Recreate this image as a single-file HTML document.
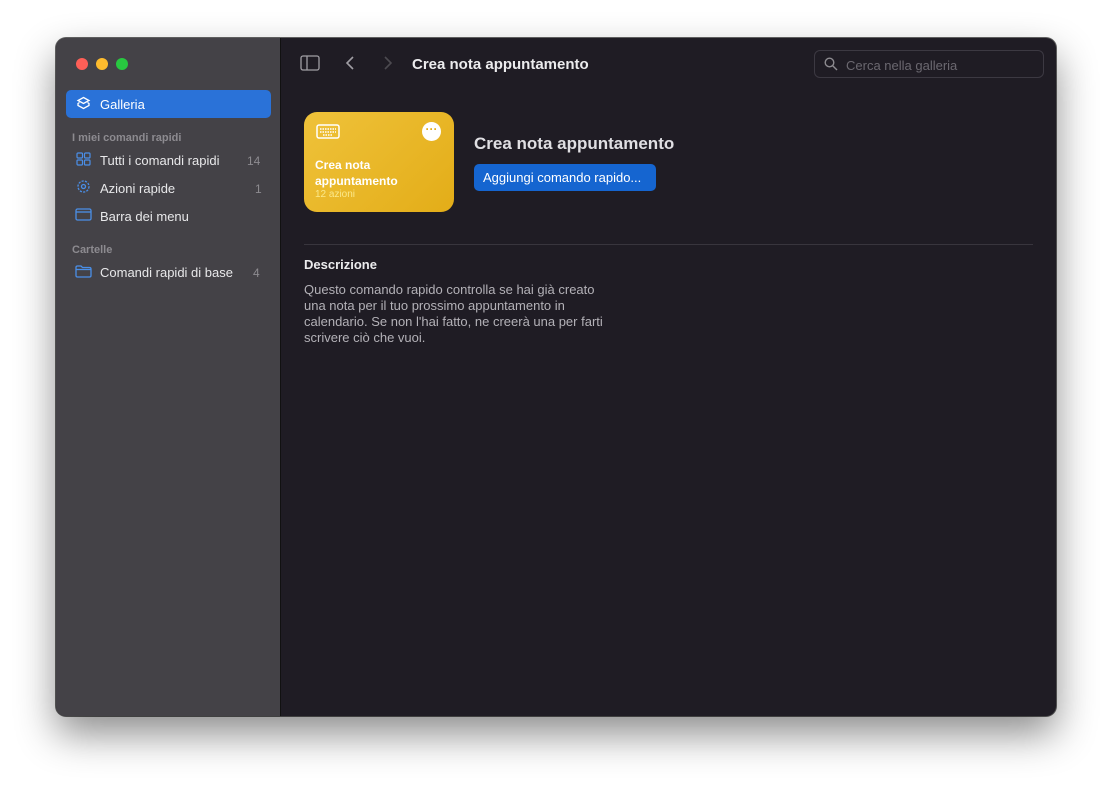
<!DOCTYPE html>
<html><head><meta charset="utf-8"><style>
*{margin:0;padding:0;box-sizing:border-box}
body{width:1112px;height:790px;background:#fff;font-family:"Liberation Sans",sans-serif;position:relative;overflow:hidden}
.win{position:absolute;left:56px;top:38px;width:1000px;height:678px;border-radius:10px;overflow:hidden;background:#1f1c24;box-shadow:0 18px 40px rgba(0,0,0,.45),0 0 0 1px rgba(0,0,0,.6)}
.side{position:absolute;left:0;top:0;width:225px;height:100%;background:#444247;border-right:1px solid #111}
.dot{position:absolute;top:20px;width:12px;height:12px;border-radius:50%}
.sel{position:absolute;left:10px;top:52px;width:205px;height:28px;background:#2a72d8;border-radius:5px}
.t{position:absolute;color:#e8e8ea;font-size:13px}
.h{position:absolute;color:#8d8b90;font-size:11px;font-weight:bold}
.n{position:absolute;color:#8d8b90;font-size:12px}
.card{position:absolute;left:248px;top:74px;width:150px;height:100px;border-radius:13px;background:linear-gradient(135deg,#efc23a,#e3ad18)}
.btn{position:absolute;left:418px;top:126px;width:182px;height:27px;background:#1565d0;border-radius:5px;color:#fff;font-size:13px;padding:6px 0 0 9px}
.search{position:absolute;left:758px;top:12px;width:230px;height:28px;border:1px solid #3c3942;border-radius:6px;color:#6b6870;font-size:13px;padding:7px 0 0 31px}
</style></head><body>
<div class="win">
<div class="side">
<div class="dot" style="left:20px;background:#fe5f57"></div>
<div class="dot" style="left:40px;background:#febc2e"></div>
<div class="dot" style="left:60px;background:#28c840"></div>
<div class="sel"></div>
<svg style="position:absolute;left:20px;top:58px" width="15" height="15" viewBox="0 0 15 15" fill="none" stroke="#fff" stroke-width="1.3"><path d="M7.5 1.5L13 4.5 7.5 7.5 2 4.5Z"/><path d="M3.5 6.5L2 7.5v2l5.5 3 5.5-3v-2l-1.5-1"/></svg>
<div class="t" style="left:44px;top:59px;color:#fff">Galleria</div>
<div class="h" style="left:16px;top:94px">I miei comandi rapidi</div>
<svg style="position:absolute;left:20px;top:114px" width="15" height="14" fill="none" stroke="#4a8fe8" stroke-width="1.2"><rect x="1" y="1" width="5.5" height="5" rx="1"/><rect x="8.5" y="1" width="5.5" height="5" rx="1"/><rect x="1" y="8" width="5.5" height="5" rx="1"/><rect x="8.5" y="8" width="5.5" height="5" rx="1"/></svg>
<div class="t" style="left:44px;top:115px">Tutti i comandi rapidi</div><div class="n" style="left:191px;top:116px">14</div>
<svg style="position:absolute;left:20px;top:141px" width="15" height="15" fill="none" stroke="#4a8fe8" stroke-width="1.3"><circle cx="7.5" cy="7.5" r="5.5" stroke-dasharray="2.2 1.2"/><circle cx="7.5" cy="7.5" r="2"/></svg>
<div class="t" style="left:44px;top:143px">Azioni rapide</div><div class="n" style="left:199px;top:144px">1</div>
<svg style="position:absolute;left:19px;top:170px" width="17" height="13" fill="none" stroke="#4a8fe8" stroke-width="1.3"><rect x="1" y="1" width="15" height="11" rx="1.5"/><path d="M1 4h15"/></svg>
<div class="t" style="left:44px;top:171px">Barra dei menu</div>
<div class="h" style="left:16px;top:206px">Cartelle</div>
<svg style="position:absolute;left:19px;top:227px" width="17" height="13" fill="none" stroke="#4a8fe8" stroke-width="1.3"><path d="M1 2.5Q1 1 2.5 1H6l1.5 1.5h7Q16 2.5 16 4v6.5Q16 12 14.5 12h-12Q1 12 1 10.5Z"/><path d="M1 4.5h15"/></svg>
<div class="t" style="left:44px;top:227px">Comandi rapidi di base</div><div class="n" style="left:197px;top:228px">4</div>
</div>
<svg style="position:absolute;left:244px;top:17px" width="20" height="16" fill="none" stroke="#a09ea4" stroke-width="1.3"><rect x="1" y="1" width="18" height="14" rx="2"/><path d="M7 1v14"/></svg>
<svg style="position:absolute;left:289px;top:17px" width="10" height="16" fill="none" stroke="#a09ea4" stroke-width="1.6"><path d="M8 2L2 8l6 6"/></svg>
<svg style="position:absolute;left:327px;top:17px" width="10" height="16" fill="none" stroke="#4c4a50" stroke-width="1.6"><path d="M2 2l6 6-6 6"/></svg>
<div style="position:absolute;left:356px;top:18px;color:#ececee;font-size:15px;font-weight:bold">Crea nota appuntamento</div>
<div class="search">Cerca nella galleria</div>
<svg style="position:absolute;left:768px;top:19px" width="14" height="14" fill="none" stroke="#8d8b90" stroke-width="1.4"><circle cx="5.5" cy="5.5" r="4.3"/><path d="M8.7 8.7L13 13"/></svg>
<div class="card">
<svg style="position:absolute;left:12px;top:12px" width="24" height="15" fill="none" stroke="#fff" stroke-width="1.5"><rect x="1" y="1" width="22" height="13" rx="2"/><path d="M4 5h16M4 8h16M7 11h10" stroke-dasharray="1.5 1"/></svg>
<div style="position:absolute;left:118px;top:10px;width:19px;height:19px;border-radius:50%;background:#fff;color:#e3ad18;font-size:12px;text-align:center;line-height:15px;font-weight:bold">···</div>
<div style="position:absolute;left:11px;top:45px;color:#fff;font-size:12px;font-weight:bold;line-height:16px">Crea nota<br>appuntamento</div>
<div style="position:absolute;left:11px;top:77px;color:#fbe88a;font-size:10px">12 azioni</div>
</div>
<div style="position:absolute;left:418px;top:96px;color:#e0dfe3;font-size:17px;font-weight:bold">Crea nota appuntamento</div>
<div class="btn">Aggiungi comando rapido...</div>
<div style="position:absolute;left:248px;top:206px;width:729px;height:1px;background:#38353d"></div>
<div style="position:absolute;left:248px;top:219px;color:#ececee;font-size:13px;font-weight:bold">Descrizione</div>
<div style="position:absolute;left:248px;top:244px;width:312px;color:#b3b1b7;font-size:13px;line-height:16px">Questo comando rapido controlla se hai già creato una nota per il tuo prossimo appuntamento in calendario. Se non l'hai fatto, ne creerà una per farti scrivere ciò che vuoi.</div>
</div>
</body></html>
